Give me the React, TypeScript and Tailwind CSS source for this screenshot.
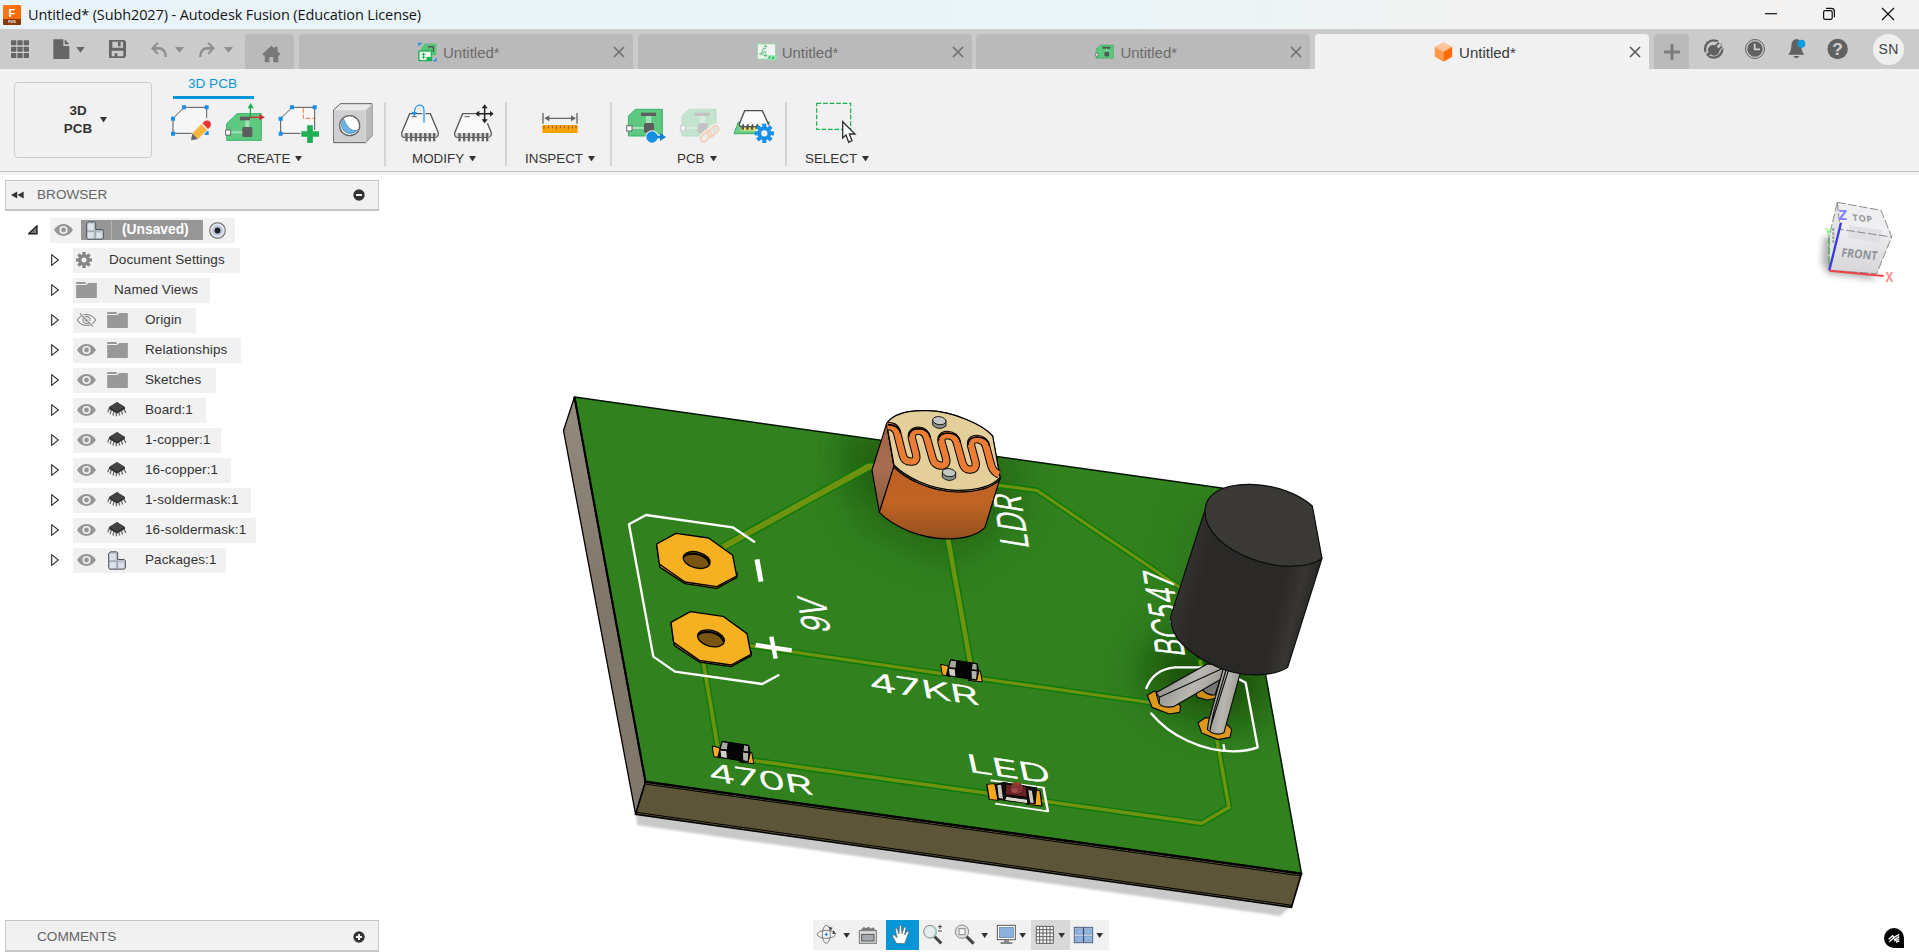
import React from "react";

const P = "#6f9211";

function Caret({ className = "" }: { className?: string }) {
  return (
    <svg viewBox="0 0 10 8" className={"h-[5.5px] w-[7px] shrink-0 " + className} preserveAspectRatio="none">
      <path d="M0 0H10L5 8Z" fill="currentColor" />
    </svg>
  );
}

/* ---------- title bar ---------- */
function TitleBar() {
  return (
    <header className="flex h-[29px] items-center bg-linear-to-r from-[#e8f4fa] via-[#ebf4f6] via-60% to-[#f3f2f1] to-80%">
      <svg viewBox="0 0 54 60" className="ml-[3px] h-5 w-[18px]">
        <rect width="54" height="60" rx="4" fill="#fd6a02" />
        <path d="M0 44V5Q0 0 5 0H40L8 44Z" fill="#ff8124" opacity=".6" />
        <path d="M0 42H54V56Q54 60 50 60H4Q0 60 0 56Z" fill="#8a3a04" />
        <text x="27" y="35" textAnchor="middle" fontSize="34" fontWeight="700" fill="#fff" className="[font-family:'Liberation_Sans',sans-serif]">F</text>
        <text x="27" y="55" textAnchor="middle" fontSize="11" fontWeight="700" fill="#fff" className="[font-family:'Liberation_Sans',sans-serif]">FUS</text>
      </svg>
      <h1 className="ml-[7px] pt-px text-[14.5px] leading-none tracking-[-0.12px] whitespace-nowrap text-[#151515] [font-family:'Open_Sans','Noto_Sans',sans-serif]">
        Untitled* (Subh2027) - Autodesk Fusion (Education License)
      </h1>
      <div className="ml-auto flex">
        <svg viewBox="0 0 58 29" className="h-[29px] w-[58px]"><path d="M23 13.7H35" stroke="#111" strokeWidth="1.2" /></svg>
        <svg viewBox="0 0 58 29" className="h-[29px] w-[58px]" fill="none" stroke="#111" strokeWidth="1.2">
          <rect x="23.6" y="10.6" width="8.6" height="8.8" rx="1.6" />
          <path d="M26 8.4H31.6Q34.4 8.6 34.4 11.5V17.2" />
        </svg>
        <svg viewBox="0 0 61 29" className="h-[29px] w-[61px]"><path d="M24 8L36 20M36 8L24 20" stroke="#111" strokeWidth="1.2" /></svg>
      </div>
    </header>
  );
}

/* ---------- document tabs ---------- */
const tabIcons = [
  <svg key="a" viewBox="1250 130 64 60" className="h-5 w-[21px]">
    <path d="M1263 146L1275 134H1309V170H1263Z" fill="#58c47a" />
    <path d="M1284 144H1300V160" stroke="#555" strokeWidth="4" fill="none" />
    <rect x="1256" y="157" width="38" height="29" fill="#f4fff6" stroke="#19b04f" strokeWidth="4" />
    <path d="M1270 162V181M1264 167H1276M1264 176H1276" stroke="#19b04f" strokeWidth="3" />
    <rect x="1279" y="175" width="16" height="12" fill="#19b04f" />
    <path d="M1256 142V134H1264M1299 186H1308V178" stroke="#1b8ceb" strokeWidth="4" fill="none" />
  </svg>,
  <svg key="b" viewBox="826 130 64 60" className="h-5 w-[21px]">
    <rect x="830" y="135" width="56" height="47" fill="#f2f2f2" stroke="#8ad4a0" strokeWidth="3" />
    <path d="M836 166H842L848 150H856M850 144H860M855 138V144M842 170L850 160H858M854 164V176M848 170H860" stroke="#48bd70" strokeWidth="3" fill="none" />
    <rect x="861" y="170" width="27" height="15" fill="#8be8aa" />
    <path d="M866 180V175H870M875 180H879V174" stroke="#19934a" strokeWidth="2.5" fill="none" />
  </svg>,
  <svg key="c" viewBox="42 58 64 60" className="h-5 w-[21px]">
    <path d="M49 78L63 67H101V107H49Z" fill="#59c87c" stroke="#3fb068" strokeWidth="2" />
    <path d="M68 75H92" stroke="#4a5a50" strokeWidth="6" />
    <path d="M80 78V88" stroke="#8fdcaa" strokeWidth="4" />
    <rect x="74" y="87" width="14" height="15" rx="3" fill="#505850" />
    <rect x="46" y="92" width="8" height="8" fill="#fff" stroke="#666" strokeWidth="2" />
  </svg>,
  <svg key="d" viewBox="1060 56 64 62" className="h-5 w-[21px]">
    <path d="M1092 57L1119 71L1092 86L1065 71Z" fill="#ffc39b" />
    <path d="M1065 71L1092 86V117L1065 102Z" fill="#ff9a4d" />
    <path d="M1119 71L1092 86V117L1119 102Z" fill="#fd6c05" />
  </svg>,
];

function DocTab({ icon, active }: { icon: React.ReactNode; active?: boolean }) {
  return (
    <div className={"flex h-[35px] w-[334px] items-center rounded-t-[4px] " + (active ? "bg-[#f1f1f1] text-[#3a3a3a]" : "bg-[#bababa] text-[#6b6b6b]")}>
      <div className="flex flex-1 items-center gap-[5px] pl-[118px]">
        {icon}
        <span className="pt-[2px] text-[15px] leading-none">Untitled*</span>
      </div>
      <svg viewBox="0 0 12 12" className="mr-[8px] size-[12px]"><path d="M1 1L11 11M11 1L1 11" stroke={active ? "#5f5f5f" : "#717171"} strokeWidth="1.7" /></svg>
    </div>
  );
}

function TabBar() {
  return (
    <div className="flex h-10 items-end bg-[#cbcbcb]">
      <svg viewBox="0 87 735 120" className="h-10 w-[245px]" fill="#666">
        {[121, 140, 159].map((y) => [33, 52, 71].map((x) => <rect key={x + "-" + y} x={x} y={y} width="16" height="15" rx="2" />))}
        <path d="M160 118H190V138H208V177H160ZM194 118L208 133H194Z" />
        <path d="M229 141H254L241.500 158Z" />
        <path d="M329 120H373L378 125V169L373 174H329L327 172V122ZM337 125V143H369V125ZM335 152V169H344V160H352V169H370V152Z" fillRule="evenodd" />
        <rect x="354" y="126" width="8" height="13" />
        <g fill="#8e8e8e">
          <path d="M453 145L472 126L476 130L466 141H480Q500 144 501 171H494Q493 152 480 149H466L475 159L472 164Z" />
          <path d="M645 145L626 126L622 130L632 141H618Q598 144 597 171H604Q605 152 618 149H632L623 159L626 164Z" />
          <path d="M525 141H552L538.500 158ZM672 141H699L685.500 158Z" />
        </g>
      </svg>
      <div className="flex h-[35px] w-[49px] items-center justify-center rounded-t-[4px] bg-[#bababa]">
        <svg viewBox="785 133 57 55" className="mt-[4px] ml-[3px] h-[18px] w-[19px]" fill="#787878">
          <path d="M813 135L823 144V138H832V152L841 161L837 165H834V186H819V170H807V186H793V165H789L785 161Z" />
        </svg>
      </div>
      <div className="ml-[5px] flex gap-[4.700px]">
        <DocTab icon={tabIcons[0]} />
        <DocTab icon={tabIcons[1]} />
        <DocTab icon={tabIcons[2]} />
        <DocTab icon={tabIcons[3]} active />
      </div>
      <div className="ml-[5px] flex h-[35px] w-[35px] items-center justify-center rounded-t-[4px] bg-[#bababa]">
        <svg viewBox="0 0 16 16" className="size-4"><path d="M8 0V16M0 8H16" stroke="#7c7c7c" strokeWidth="3" /></svg>
      </div>
      <svg viewBox="747 87 540 120" className="h-10 w-[180px]">
        <circle cx="821" cy="147" r="26" fill="none" stroke="#616161" strokeWidth="7" />
        <path d="M794 168L816 152" stroke="#cbcbcb" strokeWidth="16" />
        <path d="M824 142L842 124M831 153L850 136" stroke="#cbcbcb" strokeWidth="12" />
        <path d="M809 139Q818 131 829 138L838 148Q840 160 830 165Q820 170 812 163L804 170L798 163L806 156Q800 148 809 139Z" fill="#616161" />
        <path d="M823 142L837 128M832 153L846 139" stroke="#616161" strokeWidth="6" />
        <circle cx="945" cy="147" r="28.500" fill="none" stroke="#616161" strokeWidth="3" />
        <circle cx="945" cy="147" r="23" fill="#616161" />
        <path d="M944 131V148H960" stroke="#d4d4d4" strokeWidth="5" fill="none" />
        <path d="M1069 117Q1084 118 1084 136Q1084 156 1093 164H1044Q1054 156 1054 136Q1055 119 1069 117ZM1060 168H1078Q1069 182 1060 168Z" fill="#616161" />
        <circle cx="1084" cy="131" r="12" fill="#0d9ade" />
        <circle cx="1193" cy="147" r="30.500" fill="#616161" />
        <text x="1193" y="165" textAnchor="middle" fontSize="52" fontWeight="700" fill="#d0d0d0">?</text>
      </svg>
      <div className="mb-[4px] ml-[4px] flex size-[31px] items-center justify-center rounded-full bg-[#efefef] text-[14px] tracking-[0.4px] text-[#3f4347]">SN</div>
    </div>
  );
}

/* ---------- ribbon ---------- */
function RI({ box, children }: { box: string; children: React.ReactNode }) {
  return <svg viewBox={box} className="h-[45px] w-[54px] shrink-0">{children}</svg>;
}

function Chip({ faded }: { faded?: boolean }) {
  return (
    <g opacity={faded ? 0.3 : 1}>
      <path d="M445 348L466 328H547V408H445Z" fill="#5cc880" stroke="#3ab169" strokeWidth="3" />
      <path d="M456 384H493" stroke="#a5e0b7" strokeWidth="6" />
      <path d="M498 348V370H514V348Z" fill="#a5e0b7" />
      <rect x="483" y="338" width="45" height="10" fill="#5d5d5d" />
      <rect x="492" y="369" width="30" height="30" rx="5" fill="#5d5d5d" />
      <rect x="440" y="377" width="16" height="16" fill="#fff" stroke="#666" strokeWidth="3" />
    </g>
  );
}

function Body({ x }: { x: number }) {
  return (
    <g transform={`translate(${x} 0)`}>
      <path d="M1229 341H1291L1315 398Q1316 412 1304 412H1214Q1204 412 1205 399Z" fill="#fafafa" stroke="#5a5a5a" strokeWidth="4" />
      <path d="M1210 400H1310V410H1210Z" fill="#cfcfcf" />
      {[1219, 1233, 1247, 1261, 1275, 1289, 1302].map((v) => <rect key={v} x={v - 3} y="399" width="7" height="25" fill="#666" />)}
      <path d="M1235 350H1250" stroke="#555" strokeWidth="3" />
    </g>
  );
}

const gearPath = Array.from({ length: 8 }, (_, i) => i * 45);

function Group({ label, pad, width, inner, children }: { label: string; pad: string; width: string; inner: string; children: React.ReactNode }) {
  return (
    <section className={"flex shrink-0 flex-col " + width}>
      <div className={"flex " + pad}>{children}</div>
      <div className={"mt-[6px] flex items-center gap-[5px] text-[13.400px] leading-[15px] text-[#333] " + inner}>
        {label}
        <Caret />
      </div>
    </section>
  );
}

function Divider() {
  return <div className="mt-[2px] h-16 w-[2px] shrink-0 bg-[#d4d4d4]" />;
}

function Ribbon() {
  return (
    <div className="flex h-[103px] border-b border-[#c4c4c4] bg-[#f1f1f1]">
      <button className="mt-[13px] ml-[14px] flex h-[76px] w-[138px] shrink-0 items-center justify-center gap-[8px] rounded-[4px] border border-[#cdcdcd] pl-[5px] text-[13.400px] leading-[18px] font-bold text-[#333]">
        <span className="text-center">3D<br />PCB</span>
        <Caret />
      </button>
      <div className="flex flex-col">
        <div className="ml-[21px] flex h-[30px] w-[81px] items-start justify-center border-b-[3px] border-[#0696d7] pt-[7px] pr-[2px] text-[13.600px] leading-[15px] text-[#0f97d5]">3D PCB</div>
        <div className="mt-[1px] flex">
          <Group label="CREATE" pad="pl-[12px]" inner="pl-[85px]" width="w-[232px]">
            <RI box="492 300 162 135">
              <path d="M519 356L552 322H620V400H519Z" fill="#f6f6f6" stroke="#565656" strokeWidth="3" />
              <path d="M546 316h12v12h-12zM614 316h12v12h-12zM513 350h12v12h-12zM513 395h12v12h-12zM614 393h12v12h-12z" fill="#1590ee" />
              <g transform="translate(573 421) rotate(-45)">
                <rect x="16" y="-15" width="66" height="30" fill="#f1f1f1" />
                <path d="M0 0L18 -12V12Z" fill="#666" /><rect x="18" y="-12" width="38" height="24" fill="#f8b53c" /><path d="M60 -12H70Q80 -8 80 0Q80 8 70 12H60Z" fill="#f03434" />
              </g>
            </RI>
            <RI box="654 300 162 135">
              <path d="M680 371L711 341H784V421H680Z" fill="#5cc880" stroke="#3ab169" strokeWidth="3" />
              <path d="M690 397H728" stroke="#a5e0b7" strokeWidth="6" />
              <path d="M736 360h12v22h-12z" fill="#a5e0b7" />
              <path d="M720 350H750V361H720Z" fill="#5d5d5d" />
              <rect x="727" y="381" width="30" height="30" rx="4" fill="#5d5d5d" />
              <rect x="677" y="390" width="15" height="15" fill="#fff" stroke="#666" strokeWidth="3" />
              <path d="M751 352V322" stroke="#18ae4e" strokeWidth="4" /><path d="M743 325L752 309L761 325Z" fill="#18ae4e" />
              <path d="M750 352H780" stroke="#d62a30" strokeWidth="4" /><path d="M778 343L795 352L778 361Z" fill="#d62a30" />
            </RI>
            <RI box="816 300 162 135">
              <path d="M842 356L876 322H944V400H842Z" fill="#f6f6f6" stroke="#565656" strokeWidth="3" />
              <path d="M910 325V355H942" fill="none" stroke="#f07c2c" strokeWidth="3" strokeDasharray="14 5" />
              <path d="M870 316h12v12h-12zM938 316h12v12h-12zM836 350h12v12h-12zM836 395h12v12h-12z" fill="#1590ee" />
              <path d="M930 373V432M901 402H960" stroke="#f1f1f1" strokeWidth="24" />
              <path d="M930 376V429M904 402H957" stroke="#1fae54" strokeWidth="17" />
            </RI>
            <RI box="978 300 162 135">
              <path d="M1001 330L1021 311H1116V407L1097 428H1001Z" fill="#e9e9e9" stroke="#5e5e5e" strokeWidth="3" />
              <path d="M1098 331L1116 311V407L1098 427Z" fill="#b9b9b9" />
              <rect x="1003" y="331" width="94" height="95" fill="#cfcfd1" />
              <circle cx="1049" cy="377" r="30" fill="#fff" stroke="#666" strokeWidth="4" />
              <path d="M1031 357A26 26 0 1 0 1070 392Q1045 394 1031 357Z" fill="#6cb2e8" stroke="#3c82b8" strokeWidth="2" />
            </RI>
          </Group>
          <Divider />
          <Group label="MODIFY" pad="pl-[7px]" inner="pl-[26px]" width="w-[119px]">
            <RI box="1179 300 162 135">
              <Body x={0} />
              <path d="M1272 368V330Q1271 315 1258 315Q1244 316 1243 340" fill="none" stroke="#f1f1f1" strokeWidth="10" />
              <path d="M1272 368V330Q1271 315 1258 315Q1244 316 1243 340" fill="none" stroke="#1590ee" strokeWidth="3.500" />
              <path d="M1234 335L1251 337L1243 349Z" fill="#1590ee" />
            </RI>
            <RI box="1341 300 162 135">
              <Body x={159} />
              <path d="M1454 312V370M1426 341H1484" stroke="#f1f1f1" strokeWidth="20" />
              <path d="M1454 322V362M1432 341H1474" stroke="#222" strokeWidth="4.500" />
              <path d="M1445 325L1454 313L1463 325ZM1445 358L1454 370L1463 358ZM1438 332L1425 341L1438 350ZM1470 332L1481 341L1470 350Z" fill="#222" />
            </RI>
          </Group>
          <Divider />
          <Group label="INSPECT" pad="pl-[26px]" inner="pl-[18px]" width="w-[103px]">
            <RI box="159 300 162 135">
              <path d="M189 339V371M291 339V371M196 355H284" stroke="#666" strokeWidth="4" />
              <path d="M193 355L208 346V364ZM288 355L273 346V364Z" fill="#666" />
              <rect x="187" y="375" width="106" height="24" fill="#fba40a" />
              <path d="M192 377v10M205 377v8M217 377v8M229 377v10M241 377v8M253 377v8M265 377v10M277 377v8M288 377v8" stroke="#7d5a20" strokeWidth="3" />
            </RI>
          </Group>
          <Divider />
          <Group label="PCB" pad="pl-[7px]" inner="pl-[65px]" width="w-[173px]">
            <RI box="417 300 162 135">
              <Chip />
              <circle cx="516" cy="411" r="20" fill="#f1f1f1" /><path d="M516 411H545" stroke="#f1f1f1" strokeWidth="16" />
              <circle cx="516" cy="411" r="17" fill="#1590e4" />
              <path d="M530 407H540V399L558 411L540 423V415H530Z" fill="#0d80d2" />
            </RI>
            <RI box="579 300 162 135">
              <g transform="translate(161 0)"><Chip faded /></g>
              <g fill="none" stroke="#f1f1f1" strokeWidth="14"><rect x="-19" y="-10" width="38" height="20" rx="10" transform="translate(678 411) rotate(-45)" /><rect x="-19" y="-10" width="38" height="20" rx="10" transform="translate(700 393) rotate(-45)" /></g>
              <g fill="none" stroke="#f2d0b9" strokeWidth="6"><rect x="-19" y="-9" width="38" height="18" rx="9" transform="translate(678 409) rotate(-45)" /><rect x="-19" y="-9" width="38" height="18" rx="9" transform="translate(699 394) rotate(-45)" /></g>
            </RI>
            <RI box="741 300 162 135">
              <path d="M775 366L762 401H860L868 366Z" fill="#6fd08d" stroke="#38ac64" strokeWidth="3" />
              <path d="M782 382H850V392H782Z" fill="#f1ea62" />
              <path d="M794 332H847L865 372Q866 380 858 380H785Q777 380 778 372Z" fill="#fafafa" stroke="#4e4e4e" strokeWidth="4" />
              {[784, 798, 812, 826, 840].map((v) => <path key={v} d={`M${v} 389Q${v} 372 ${v + 8} 371V389Z`} fill="#555" />)}
              <circle cx="853" cy="400" r="28" fill="#f1f1f1" />
              {gearPath.map((a) => <rect key={a} x="847" y="371" width="12" height="14" fill="#158fec" transform={`rotate(${a} 853 400)`} />)}
              <circle cx="853" cy="400" r="15" fill="none" stroke="#158fec" strokeWidth="11" />
            </RI>
          </Group>
          <Divider />
          <Group label="SELECT" pad="pl-[21px]" inner="pl-[18px]" width="w-[120px]">
            <RI box="984 300 162 135">
              <rect x="1010" y="310" width="102" height="78" fill="none" stroke="#18b04e" strokeWidth="3.500" strokeDasharray="14 5.500" />
              <path d="M1088 365V414L1098 405L1106 427L1116 422L1108 402H1125Z" fill="#fff" stroke="#333" strokeWidth="4" />
            </RI>
          </Group>
        </div>
      </div>
    </div>
  );
}

/* ---------- browser tree ---------- */
const Eye = () => (
  <svg viewBox="0 0 58 36" className="h-3 w-[19px] shrink-0">
    <path d="M0 18Q12 0 29 0Q46 0 58 18Q46 36 29 36Q12 36 0 18Z" fill="#969696" />
    <circle cx="29" cy="18" r="10" fill="none" stroke="#f1f1f1" strokeWidth="5" />
  </svg>
);
const EyeOff = () => (
  <svg viewBox="0 0 58 42" className="h-[14px] w-[19px] shrink-0" fill="none" stroke="#858585" strokeWidth="3.200">
    <path d="M1 21Q12 4 29 4Q46 4 57 21Q46 38 29 38Q12 38 1 21Z" /><circle cx="29" cy="21" r="11" /><circle cx="29" cy="21" r="4" />
    <path d="M11 1L51 41" stroke="#f1f1f1" strokeWidth="6" /><path d="M9 1L49 41" />
  </svg>
);
const Folder = () => (
  <svg viewBox="0 0 62 48" className="h-4 w-[21px] shrink-0"><path d="M0 9H29L37 3H62V48H0ZM0 0H25L31 2L27 6H0Z" fill="#989898" /></svg>
);
const ChipDark = () => (
  <svg viewBox="0 0 60 44" className="mb-px h-[14.500px] w-[20px] shrink-0">
    <path d="M6 20L2 31M13 23L9 37M21 27L18 41M28 29V43M35 29L38 41M43 26L47 38M51 22L57 33" stroke="#6c6c6c" strokeWidth="4" />
    <path d="M30 0L54 15V21L30 35L6 21V15Z" fill="#2f2f2f" /><path d="M30 1L53 15L30 29L7 15Z" fill="#444" />
  </svg>
);
const Blocks = () => (
  <svg viewBox="0 0 54 56" className="h-[19px] w-[18px] shrink-0" stroke="#4c525a" strokeWidth="3">
    <path d="M2 7L7 2H26L29 5V25H49L53 30V50L48 54H5L2 50Z" fill="#b9bfc9" />
    <path d="M5 8H23V27H5ZM5 33H23V51H5ZM31 34H47V51H31Z" fill="#dde1e8" stroke="none" /><path d="M2 30H28V54" fill="none" stroke="#8a919b" strokeWidth="2" />
  </svg>
);
const Gear = () => (
  <svg viewBox="-24 -24 48 48" className="size-4 shrink-0">
    {gearPath.map((a) => <rect key={a} x="-5" y="-24" width="10" height="12" fill="#858585" transform={`rotate(${a})`} />)}
    <circle r="12.500" fill="none" stroke="#858585" strokeWidth="10" />
  </svg>
);

type Row = { name: string; w: string; vis?: "on" | "off"; icon: "gear" | "folder" | "chip" | "blocks" };
const rows: Row[] = [
  { name: "Document Settings", w: "w-[167px]", icon: "gear" },
  { name: "Named Views", w: "w-[137px]", icon: "folder" },
  { name: "Origin", w: "w-[123px]", vis: "off", icon: "folder" },
  { name: "Relationships", w: "w-[168px]", vis: "on", icon: "folder" },
  { name: "Sketches", w: "w-[143px]", vis: "on", icon: "folder" },
  { name: "Board:1", w: "w-[133px]", vis: "on", icon: "chip" },
  { name: "1-copper:1", w: "w-[148px]", vis: "on", icon: "chip" },
  { name: "16-copper:1", w: "w-[158px]", vis: "on", icon: "chip" },
  { name: "1-soldermask:1", w: "w-[178px]", vis: "on", icon: "chip" },
  { name: "16-soldermask:1", w: "w-[183px]", vis: "on", icon: "chip" },
  { name: "Packages:1", w: "w-[153px]", vis: "on", icon: "blocks" },
];
const icons = { gear: <Gear />, folder: <Folder />, chip: <ChipDark />, blocks: <Blocks /> };

function Browser() {
  return (
    <aside className="w-[380px] shrink-0 pt-[5px]">
      <div className="ml-[5px] flex h-[31px] w-[374px] items-center border border-b-2 border-[#c6c6c6] bg-[#f1f1f1] text-[13.600px] text-[#666]">
        <svg viewBox="0 0 40 24" className="ml-[5px] h-2 w-[13px]"><path d="M0 12L19 1V23ZM20 12L39 1V23Z" fill="#333" /></svg>
        <span className="ml-[13px] pt-px">BROWSER</span>
        <svg viewBox="0 0 12 12" className="mr-[13px] ml-auto size-[12px]"><circle cx="6" cy="6" r="5.700" fill="#333" /><path d="M3 6H9" stroke="#f1f1f1" strokeWidth="2" /></svg>
      </div>
      <div className="mt-[4px] flex h-[30px] items-center pl-[28px]">
        <svg viewBox="0 0 30 28" className="h-[9.500px] w-[10px]"><path d="M2 26L27 2V26Z" fill="#777" stroke="#222" strokeWidth="4" /></svg>
        <div className="ml-[12px] flex h-[25px] w-[185px] items-center bg-[#f1f1f1] pl-[4px]">
          <Eye />
          <div className="ml-[8px] flex h-[20px] w-[122px] items-center bg-[#979797]">
            <span className="ml-[5px] flex w-[26px] border-r border-[#b5b5b5]"><Blocks /></span>
            <span className="ml-[10px] pt-px text-[13.800px] font-bold text-white">(Unsaved)</span>
          </div>
          <svg viewBox="0 0 50 50" className="ml-[6px] size-[17px]"><circle cx="25" cy="25" r="23" fill="#dce3ee" stroke="#666" strokeWidth="3" /><circle cx="25" cy="25" r="15" fill="#b9c4d6" /><circle cx="25" cy="25" r="8.500" fill="#222" /></svg>
        </div>
      </div>
      <ul>
        {rows.map((r) => (
          <li key={r.name} className="flex h-[30px] items-center pl-[51px]">
            <svg viewBox="0 0 24 36" className="h-3 w-2 shrink-0"><path d="M2 2L22 18L2 34Z" fill="#fff" stroke="#333" strokeWidth="3.500" strokeLinejoin="round" /></svg>
            <div className={"ml-[14px] flex h-[25px] items-center bg-[#f1f1f1] pl-[3px] text-[13.500px] tracking-[0.1px] text-[#333] " + r.w}>
              {r.vis && <div className="flex w-[31px] shrink-0 pl-px">{r.vis === "on" ? <Eye /> : <EyeOff />}</div>}
              <div className={"flex shrink-0 " + (r.icon === "gear" ? "w-[33px]" : "w-[38px] " + (r.icon === "blocks" ? "pl-[1px]" : ""))}>{icons[r.icon]}</div>
              <span className="pt-px whitespace-nowrap">{r.name}</span>
            </div>
          </li>
        ))}
      </ul>
    </aside>
  );
}

/* ---------- 3D scene ---------- */
function Trace({ d, w = 3.2 }: { d: string; w?: number }) {
  return (
    <g fill="none" strokeLinejoin="round">
      <path d={d} stroke="#0b7a08" strokeWidth={w + 2.8} />
      <path d={d} stroke={P} strokeWidth={w} />
    </g>
  );
}

/* Silkscreen label: baseline runs from a to b, `down` is the cap-height vector. */
function Silk({ a, b, down, children }: { a: [number, number]; b: [number, number]; down: [number, number]; children: string }) {
  const L = 300;
  const m = [(b[0] - a[0]) / L, (b[1] - a[1]) / L, down[0] / 73, down[1] / 73, a[0], a[1]];
  return (
    <text transform={`matrix(${m.join(" ")})`} fontSize="100" textLength={L} lengthAdjust="spacingAndGlyphs" fill="#fff" fontWeight="300" stroke="#fff" strokeWidth="2" className="[font-family:Inter,sans-serif]">
      {children}
    </text>
  );
}

function Resistor({ x, y }: { x: number; y: number }) {
  return (
    <g transform={`translate(${x} ${y}) scale(.3333)`} stroke="#000" strokeWidth="3" strokeLinejoin="round">
      <path d="M-62 -18L-40 -13L-36 18L-57 14Z" fill="#f2ab22" />
      <path d="M38 -2L57 2L63 35L20 30L40 24Z" fill="#f2ab22" />
      <path d="M-32 -32L48 -20L52 5L46 30L-45 15L-38 -10Z" fill="#050505" />
      <path d="M-32 -31L-14 -28L-16 -6L-38 -8Z" fill="#a8a8a0" />
      <path d="M-39 -6L-18 -4L-16 20L-36 16Z" fill="#d0cfc8" />
      <path d="M33 -22L47 -19L48 0L30 -2Z" fill="#a8a8a0" />
      <path d="M29 0L48 2L46 29L30 26Z" fill="#b5b4ac" />
    </g>
  );
}

const snake = "M112 108Q138 108 142 132L158 195Q163 216 185 215Q203 214 198 192L186 146Q182 124 204 122Q226 122 231 146L248 206Q254 227 275 227Q293 225 288 204L275 158Q270 136 292 135Q316 136 321 160L337 218Q343 240 362 239Q382 237 376 214L364 170Q359 147 380 147Q404 148 409 172L424 228Q430 246 447 253";

function Scene() {
  return (
    <svg viewBox="550 175 780 745" className="ml-[170px] h-[745px] w-[780px] shrink-0">
      <defs>
        <filter id="soft" x="-60%" y="-60%" width="220%" height="220%"><feGaussianBlur stdDeviation="20" /></filter>
        <filter id="soft2"><feGaussianBlur stdDeviation="1" /></filter>
        <clipPath id="top"><path d="M574.500 397L1223 488.300L1234 500L1301.500 873.600L645.500 781.700Z" /></clipPath>
        <linearGradient id="side" x1="0" y1="0" x2="0" y2="1"><stop offset="0" stopColor="#948b80" /><stop offset=".5" stopColor="#80776a" /><stop offset="1" stopColor="#7f786b" /></linearGradient>
        <linearGradient id="ldrF" x1="0" y1="0" x2="0" y2="1"><stop offset="0" stopColor="#bd6024" /><stop offset=".5" stopColor="#c06424" /><stop offset="1" stopColor="#94501f" /></linearGradient>
        <linearGradient id="ldrL" x1="0" y1="0" x2="0" y2="1"><stop offset="0" stopColor="#a0613f" /><stop offset=".5" stopColor="#a86d53" /><stop offset="1" stopColor="#8a583d" /></linearGradient>
        <linearGradient id="bjt" x1="0" y1="0" x2="1" y2=".25"><stop offset="0" stopColor="#2c2b29" /><stop offset=".12" stopColor="#373633" /><stop offset=".3" stopColor="#2a2927" /><stop offset=".8" stopColor="#2a2927" /><stop offset=".92" stopColor="#373633" /><stop offset="1" stopColor="#2a2927" /></linearGradient>
        <linearGradient id="leg" x1="0" y1="0" x2="1" y2=".3"><stop offset="0" stopColor="#85837d" /><stop offset=".6" stopColor="#b9b7b1" /><stop offset="1" stopColor="#98968f" /></linearGradient>
      </defs>

      <path d="M636 812L1292 905L1280 916L637 825Z" fill="#c9c9c9" filter="url(#soft2)" />
      <path d="M574.500 397L563.500 430.500L635.600 814.300L645.500 781.700Z" fill="url(#side)" stroke="#000" strokeWidth="1.300" />
      <path d="M645.500 781.700L1301.500 873.600L1291.500 907.300L635.600 814.300Z" fill="#5d5538" stroke="#000" strokeWidth="1.600" />
      <path d="M574.500 397L1223 488.300L1234 500L1301.500 873.600L645.500 781.700Z" fill="#32811f" stroke="#041504" strokeWidth="1.500" />
      <path d="M574.500 397L645.500 781.700L1301.500 873.600" fill="none" stroke="#000" strokeWidth="2.200" />
      <path d="M645 784L1300 875.800M636.200 812.300L1291.800 905.300" fill="none" stroke="#000" strokeWidth="1" />

      <g clipPath="url(#top)">
        <path d="M850 430L1005 445L1020 510L950 560L860 520Z" fill="#0d3a06" opacity=".4" filter="url(#soft)" />
        <path d="M845 435L890 440V480L860 480Z" fill="#0d3a06" opacity=".35" filter="url(#soft)" />
        <path d="M1160 640L1270 650L1265 720L1190 715L1140 680Z" fill="#0d3a06" opacity=".7" filter="url(#soft)" />
        <path d="M1190 500L1250 510L1200 640L1165 640Z" fill="#0d3a06" opacity=".15" filter="url(#soft)" />
      </g>

      <Trace d="M723 547L869 466.500L892 466" w={6} />
      <Trace d="M947.700 537L970.500 664" w={4.6} />
      <Trace d="M750 645.700L942 673.700" />
      <Trace d="M980 678.500L1150 702.500" />
      <Trace d="M996 485L1037 490.500L1150 567L1182 589" />
      <Trace d="M703 660L717.500 746" w={3.800} />
      <Trace d="M750 760L1201.700 823.300L1229 807.300L1216.600 738" w={3.600} />
      <Trace d="M1200 660L1203 675" />

      <g transform="translate(550 380) scale(.33333)" strokeLinejoin="round">
        <path d="M615 487L548 442L288 405L237 433L310 830L375 875L637 912L688 884" fill="none" stroke="#fff" strokeWidth="7" />
        <path d="M621 538L633 605" stroke="#fff" strokeWidth="15" />
        <path d="M617 795L725 811M664 770L677 836" stroke="#fff" strokeWidth="13" />
        {[[0, 0], [43, 235]].map(([dx, dy]) => (
          <g key={dx} transform={`translate(${dx} ${dy})`} stroke="#000" strokeWidth="4">
            <path d="M320 494L330 562L405 611L500 625L561 592V580Z" fill="#c98a12" />
            <path d="M320 492L378 460L476 474L548 526L560 588L500 620L405 606L328 552Z" fill="#f6b122" />
            <ellipse cx="440" cy="540" rx="41" ry="24" transform="rotate(15 440 540)" fill="#7a5510" />
            <path d="M400 531Q412 518 440 522Q472 528 478 551" fill="none" strokeWidth="6" />
          </g>
        ))}
      </g>

      <Silk a={[870, 690]} b={[980, 705.200]} down={[3.500, 18]}>47KR</Silk>
      <Silk a={[709.500, 780.500]} b={[814, 795.200]} down={[3.500, 18]}>470R</Silk>
      <Silk a={[969, 771.700]} b={[1052, 783.500]} down={[4, 18]}>LED</Silk>
      <Silk a={[1029, 549]} b={[1020.500, 496]} down={[28, 4.500]}>LDR</Silk>
      <Silk a={[830.500, 633.500]} b={[825, 599]} down={[28, 4]}>9V</Silk>
      <Silk a={[1185, 657]} b={[1171.500, 573]} down={[29, 3.500]}>BC547</Silk>

      <Resistor x={961.300} y={670.300} />
      <Resistor x={732.800} y={752} />

      <g transform="translate(550 690) scale(.49744 .33333)" strokeLinejoin="round">
        <path d="M886 271L992 293L1001 364L895 341" fill="none" stroke="#fff" strokeWidth="5" />
        <g stroke="#000" strokeWidth="2.500">
          <path d="M878 283L894 281L902 331L883 328Z" fill="#f5a81c" />
          <path d="M974 300L985 302L989 348L958 343Z" fill="#f5a81c" />
          <path d="M897 283L912 277L978 294L975 342L900 328Z" fill="#161210" />
          <path d="M898 284L908 282L912 328L901 325Z" fill="#c9c6bd" />
          <path d="M960 299L970 301L974 341L964 339Z" fill="#c9c6bd" />
          <path d="M916 319L960 328L961 341L914 331Z" fill="#ddd9ce" />
          <path d="M916 282L957 290L960 322L915 314Z" fill="#6a2224" />
          <ellipse cx="938" cy="296" rx="14" ry="17" fill="#853335" stroke="#3e1111" strokeWidth="1.500" />
          <ellipse cx="934" cy="302" rx="6" ry="7" fill="#a04a4a" stroke="none" />
          <ellipse cx="938" cy="280" rx="9" ry="5" fill="#8f4527" stroke="none" />
        </g>
      </g>

      <g transform="translate(850 390) scale(.33333)" stroke="#000" strokeWidth="3.500" strokeLinejoin="round">
        <path d="M110 100L66 240L88 367L132 230Z" fill="url(#ldrL)" />
        <path d="M132 228C165 266 240 305 320 305C390 305 430 288 450 265L405 412C370 450 270 460 180 425C140 408 110 390 88 367Z" fill="url(#ldrF)" />
        <path d="M110 103C130 70 180 60 235 62C310 64 400 105 428 138L450 262V268C430 290 390 306 320 306C240 303 165 266 132 231Z" fill="#8b7c52" />
        <path d="M110 100C130 70 180 60 235 62C310 64 400 105 428 138L450 262C430 285 390 301 320 301C240 298 165 260 132 225Z" fill="#e4ce9a" />
        <g fill="none">
          <path d={snake} strokeWidth="25" />
          <path d={snake} stroke="#ea7c33" strokeWidth="19" />
          <path d="M114 104Q148 106 152 130M176 140Q178 116 206 116Q236 117 241 142M265 152Q266 129 294 129Q326 130 331 156M354 165Q355 141 382 141Q414 142 419 168" strokeWidth="5" />
        </g>
        {[[268, 92], [297, 248]].map(([cx, cy]) => (
          <g key={cx} strokeWidth="2.500">
            <path d={`M${cx - 20} ${cy}V${cy + 14}Q${cx} ${cy + 32} ${cx + 20} ${cy + 16}V${cy}Z`} fill="#8e918e" />
            <ellipse cx={cx} cy={cy} rx="20" ry="12" fill="#c3c7c4" transform={`rotate(8 ${cx} ${cy})`} />
          </g>
        ))}
      </g>

      <g transform="translate(1120 460) scale(.33333)" strokeLinejoin="round">
        <g fill="none" stroke="#fff" strokeWidth="7">
          <path d="M78 687Q100 628 165 622H260" />
          <path d="M355 656L377 668L413 862Q385 873 340 874C250 874 150 830 92 758M310 853L314 872" />
        </g>
        <g stroke="#0a0a0a" strokeWidth="3.500">
          <path d="M228 700L250 688H298L292 714L262 720L232 712Z" fill="#cf8f18" />
          <path d="M248 690L268 650L300 660L285 705Q262 706 248 690Z" fill="#777" />
          <path d="M82 706L102 694L130 695L182 738L179 757L148 762L96 742Z" fill="#dc991c" />
          <path d="M234 788L256 773L309 780L335 808L330 832L294 839L245 819Z" fill="#dc991c" />
          <path d="M108 698L262 612L330 615L304 657L160 740Q125 745 117 730Z" fill="url(#leg)" />
          <path d="M108 698L118 712V730M118 712L306 626" fill="none" />
          <path d="M310 625L362 635L312 818Q285 830 262 808L266 783Z" fill="url(#leg)" />
          <path d="M318 630L280 760L270 812M325 632L270 806" fill="none" />
          <path d="M255 150L152 470C150 530 200 580 290 620C370 655 460 650 503 622L606 295L500 200Z" fill="url(#bjt)" />
          <path d="M255 150C258 100 310 72 390 73C470 74 540 105 577 138L606 295C570 325 470 328 390 295C320 268 252 215 255 150Z" fill="#3a3935" />
        </g>
      </g>
    </svg>
  );
}

function ViewCube() {
  return (
    <svg viewBox="1110 570 327 300" className="mt-[15px] ml-auto h-[100px] w-[109px]">
      <defs>
        <filter id="cubeShadow" x="-30%" y="-30%" width="160%" height="160%"><feGaussianBlur stdDeviation="10" /></filter>
        <linearGradient id="cubeFront" x1="0" y1="0" x2="0" y2="1"><stop offset="0" stopColor="#efeff1" /><stop offset="1" stopColor="#d5d5d7" /></linearGradient>
      </defs>
      <path d="M1150 715L1200 700L1310 840L1165 822L1145 790Z" fill="#777" opacity=".55" filter="url(#cubeShadow)" />
      <path d="M1192 607L1165 720L1168 812L1201 688Z" fill="#e4e4e6" />
      <path d="M1192 607L1323 631L1355 711L1201 688Z" fill="#efeff1" />
      <path d="M1201 688L1355 711L1310 821L1168 811Z" fill="url(#cubeFront)" />
      <path d="M1228 676L1325 691L1320 728L1224 714Z" fill="#dfe0e6" />
      <path d="M1192 607L1323 631L1355 711L1310 821L1168 811L1165 720ZM1192 607L1201 688L1355 711" fill="none" stroke="#77777a" strokeWidth="2.500" strokeDasharray="26 7" />
      <path d="M1168 715V811" stroke="#5fb85f" strokeWidth="4" strokeDasharray="22 5" />
      <path d="M1180 685V728" stroke="#999" strokeWidth="6" strokeDasharray="8 4" />
      <g className="[font-family:'Open_Sans',sans-serif]" textAnchor="middle">
        <text x="1165" y="708" fontSize="34" fontWeight="600" fill="#86f586">Y</text>
        <text transform="matrix(1 .1 .12 1 1268 665)" fontSize="27" fontWeight="700" fill="#97979c" textLength="58">TOP</text>
        <text transform="matrix(1 .09 -.17 1 1256 775)" fontSize="36" fontWeight="700" fill="#8f9197" textLength="108" lengthAdjust="spacingAndGlyphs">FRONT</text>
        <text x="1208" y="659" fontSize="44" fontWeight="700" fill="#8482f6">Z</text>
        <text x="1348" y="846" fontSize="44" fontWeight="700" fill="#fb8b8b" textLength="23" lengthAdjust="spacingAndGlyphs">X</text>
      </g>
      <path d="M1168 811L1203 668" stroke="#3c3ce0" strokeWidth="7" />
      <path d="M1168 812L1331 828" stroke="#ee4045" strokeWidth="6" />
    </svg>
  );
}

/* ---------- bottom bar ---------- */
const dd = (x: number) => <path d={`M${x - 10} 69H${x + 10}L${x} 84Z`} fill="#333" />;

function NavBar() {
  return (
    <nav className="flex h-[30px] bg-[#f1f1f1]">
      <svg viewBox="39 30 123 90" className="h-[30px] w-[41px]" fill="none" stroke="#7b7f84" strokeWidth="3">
        <ellipse cx="79" cy="73" rx="27" ry="12" /><ellipse cx="79" cy="73" rx="12" ry="27" />
        <path d="M79 64V82M70 73H88" stroke="#f1f1f1" strokeWidth="8" /><path d="M79 68V78M74 73H84" stroke="#1684dc" />
        <path d="M86 50L98 53L92 62Z" fill="#444" stroke="none" /><path d="M100 60L108 71L97 72Z" fill="#444" stroke="none" />
        <g stroke="none">{dd(140)}</g>
      </svg>
      <svg viewBox="162 30 96 90" className="h-[30px] w-[32px]">
        <path d="M180 62L192 50L196 55L207 50L212 56L220 52L226 60Z" fill="#777" />
        <rect x="178" y="62" width="51" height="38" fill="#dedede" stroke="#777" strokeWidth="3" /><rect x="185" y="73" width="37" height="20" fill="#a5a9ae" stroke="#555" strokeWidth="3" />
      </svg>
      <svg viewBox="258 30 99 90" className="h-[30px] w-[33px] bg-[#0696d7]">
        <path d="M289 100L277 78Q276 73 283 75L291 83L286 58Q286 52 291 55L297 72L298 49Q301 43 304 49L306 71L312 52Q317 48 318 54L314 75L322 63Q329 62 326 68L317 92L314 101Z" fill="#fff" stroke="#4b5a66" strokeWidth="2" />
      </svg>
      <svg viewBox="357 30 99 90" className="h-[30px] w-[33px]">
        <path d="M402 78L424 100" stroke="#444" strokeWidth="9" /><circle cx="390" cy="65" r="19" fill="#e6ebec" stroke="#84888c" strokeWidth="3" /><path d="M397 48A18 18 0 0 1 400 80" stroke="#9dc3bb" strokeWidth="5" fill="none" />
        <path d="M414 50H426M420 44V57M414 63H426" stroke="#444" strokeWidth="3" />
      </svg>
      <svg viewBox="456 30 129 90" className="h-[30px] w-[43px]">
        <path d="M499 79L521 101" stroke="#444" strokeWidth="9" /><circle cx="486" cy="65" r="20" fill="#dfe3e6" stroke="#84888c" strokeWidth="3" /><rect x="477" y="56" width="18" height="18" fill="#f6f6f6" stroke="#888" strokeWidth="3" />
        {dd(554)}
      </svg>
      <svg viewBox="585 30 108 90" className="h-[30px] w-[36px]">
        <rect x="592" y="46" width="54" height="43" fill="#fff" stroke="#555" strokeWidth="3" /><rect x="598" y="52" width="42" height="31" fill="#8fb1de" stroke="#5b7ea8" strokeWidth="2" /><path d="M612 90H627V96H637V102H602V96H612Z" fill="#888" />
        {dd(668)}
      </svg>
      <svg viewBox="693 30 117 90" className="h-[30px] w-[39px] bg-[#d8d8d8]">
        <rect x="709" y="49" width="51" height="51" fill="#fff" />
        <path d="M709 49H760V100H709ZM719 49V100M729 49V100M740 49V100M750 49V100M709 59H760M709 69H760M709 80H760M709 90H760" fill="none" stroke="#5d5d5d" strokeWidth="3" />
        {dd(785)}
      </svg>
      <svg viewBox="810 30 117 90" className="h-[30px] w-[39px]">
        <rect x="823" y="52" width="55" height="46" fill="#f1f1f1" stroke="#446088" strokeWidth="3" /><path d="M827 56H848V73H827ZM853 56H874V73H853ZM827 78H848V94H827ZM853 78H874V94H853Z" fill="#94b4e0" stroke="#668bb8" strokeWidth="2" /><path d="M850.500 52V98" stroke="#334c70" strokeWidth="3" />
        {dd(899)}
      </svg>
    </nav>
  );
}

export default function App() {
  return (
    <div className="flex h-[952px] w-[1919px] flex-col overflow-hidden bg-white [font-family:'Liberation_Sans',Arial,sans-serif]">
      <TitleBar />
      <TabBar />
      <Ribbon />
      <div className="h-[3px] bg-[#f3f3f3]" />
      <main className="flex h-[745px] shrink-0">
        <Browser />
        <Scene />
        <ViewCube />
      </main>
      <footer className="flex h-8">
        <div className="ml-[5px] flex h-[32px] w-[374px] shrink-0 items-center border border-b-2 border-[#c6c6c6] bg-[#f1f1f1] pt-[2px] text-[13.600px] text-[#666]">
          <span className="ml-[31px] pt-px">COMMENTS</span>
          <svg viewBox="0 0 12 12" className="mr-[13px] ml-auto size-[12px]"><circle cx="6" cy="6" r="5.700" fill="#333" /><path d="M3 6H9M6 3V9" stroke="#f1f1f1" strokeWidth="2" /></svg>
        </div>
        <div className="ml-[434px]"><NavBar /></div>
        <div className="mt-[8px] mr-[15px] ml-auto size-5 rounded-full rounded-br-[3px] bg-black">
          <svg viewBox="0 0 60 60" className="size-5" stroke="#fff" strokeWidth="4" fill="none"><path d="M14 34L26 23L30 28L46 19M16 41L28 30L32 35L46 26M31 39L46 33M36 42L46 39" /></svg>
        </div>
      </footer>
    </div>
  );
}
